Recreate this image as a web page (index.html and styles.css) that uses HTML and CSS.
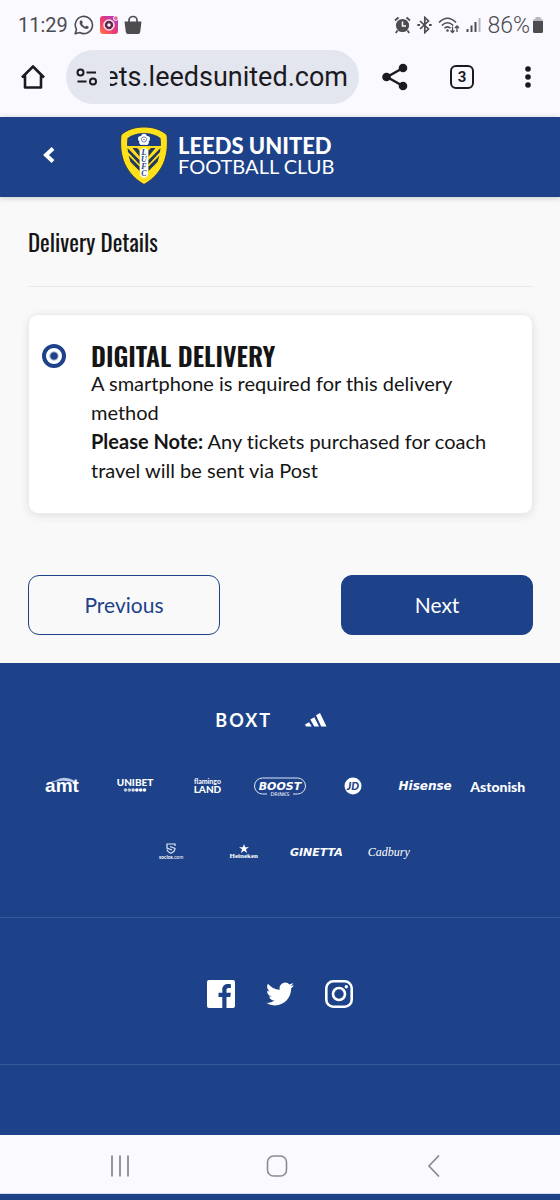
FILE: index.html
```html
<!DOCTYPE html>
<html lang="en">
  <head>
    <meta charset="UTF-8" />
    <meta name="viewport" content="width=device-width, initial-scale=1.0" />
    <title>Delivery Details - Leeds United Football Club</title>
    <link rel="stylesheet" href="styles.css">
  </head>
  <body>
    <div class="status-bar">
      <span class="clock">11:29</span>
      <svg width="20" height="20" viewBox="0 0 20 20">
        <path d="M1.2 18.8l1.3-4.4a8.6 8.6 0 1 1 3.2 3.1z" fill="none" stroke="#4d4d4f" stroke-width="1.6" stroke-linejoin="round" />
        <path d="M6.2 5.8c.7-.9 1.6-.8 1.9 0l.7 1.6c.1.4-.6 1-.8 1.3.8 1.5 1.8 2.4 3.3 3.1.5-.5.9-1.2 1.4-1l1.7.8c.7.5.2 1.500-.5 2-2.2 1.500-7.700-2.100-8.300-5.600-.1-.9.1-1.700.6-2.200z" fill="#4d4d4f" />
      </svg>
      <svg width="18" height="18" viewBox="0 0 18 18">
        <defs>
          <linearGradient id="instaFill" x1="0" y1="1" x2="1" y2="0">
            <stop offset="0" stop-color="#ff7a45" />
            <stop offset="0.45" stop-color="#ee3a72" />
            <stop offset="1" stop-color="#9a3fd0" />
          </linearGradient>
        </defs>
        <rect width="18" height="18" rx="3" fill="url(#instaFill)" />
        <circle cx="9" cy="9" r="5" fill="#5c2a45" stroke="#f9dfe8" stroke-width="1.6" />
        <circle cx="9" cy="9" r="1.7" fill="#fff" />
        <circle cx="15.8" cy="2.2" r="2.3" fill="#e8648c" stroke="#faf9ff" />
      </svg>
      <svg width="18" height="20" viewBox="0 0 18 20">
        <path d="M.5 6.5h17L16.2 17q-.3 2-2 2H3.8q-1.700 0-2-2z" fill="#4d4d4f" />
        <path d="M5 8V5.5a4 4 0 0 1 8 0V8" fill="none" stroke="#4d4d4f" stroke-width="1.7" />
      </svg>
      <div class="status-right">
        <svg width="17" height="18" viewBox="0 0 17 18">
          <circle cx="8.5" cy="9.5" r="6.6" fill="#4d4d4f" />
          <path d="M1 4.5L4.5 1.5M16 4.5L12.5 1.5M3.5 14.5L1.8 17M13.5 14.5l1.7 2.5" stroke="#4d4d4f" stroke-width="1.8" />
          <path d="M8.5 5.5v4.5h3.5" fill="none" stroke="#faf9ff" stroke-width="1.5" />
        </svg>
        <svg width="15" height="18" viewBox="0 0 15 18">
          <path d="M3 5l8.500 8-3.700 3.500V1.500L11.500 5 3 13" fill="none" stroke="#4d4d4f" stroke-width="1.7" />
          <path d="M.3 9h2.700M12 9h2.700" stroke="#4d4d4f" stroke-width="2" />
        </svg>
        <svg width="22" height="18" viewBox="0 0 22 18">
          <path d="M1 6.5q8.500-8.500 17 0M3.8 9.5q5.700-5.500 11.400 0M6.5 12.2q3-2.700 6 0" fill="none" stroke="#4d4d4f" stroke-width="1.6" />
          <circle cx="9.5" cy="14.5" r="1.3" fill="#4d4d4f" />
          <path d="M14.5 10.5v6M12.5 14.5l2 2 2-2M19 16v-6M17 12l2-2 2 2" fill="none" stroke="#4d4d4f" stroke-width="1.3" />
        </svg>
        <svg width="15" height="16" viewBox="0 0 15 16">
          <path d="M1.5 15v-3M5.5 15V8.5M9.5 15V5" stroke="#4d4d4f" stroke-width="2" />
          <path d="M13.5 15V1" stroke="#b5b5ba" stroke-width="2" />
        </svg>
        <span class="battery-level">86%</span>
        <svg width="12" height="16" viewBox="0 0 12 16">
          <path d="M3.5 0h5v2h-5zM1.5 2h9v3h-9z" fill="#b5b5ba" />
          <path d="M1 4h10v10.500q0 1.500-1.500 1.500h-7Q1 16 1 14.500z" fill="#4d4d4f" />
        </svg>
      </div>
    </div>

    <div class="browser-bar">
      <button type="button" class="icon-button" aria-label="Home">
        <svg width="26" height="26" viewBox="0 0 26 26">
          <path d="M2 13.5L13 2.5l11 11M5 11.5V23.5h16V11.5" fill="none" stroke="#1b1b1f" stroke-width="2.6" stroke-linejoin="round" />
        </svg>
      </button>
      <div class="address">
        <svg width="22" height="18" viewBox="0 0 22 18">
          <g fill="none" stroke="#1b1b1f" stroke-width="2">
            <circle cx="4.5" cy="4.5" r="3" />
            <path d="M10.5 4.5H20M1.5 13.5h9" />
            <circle cx="17" cy="13.5" r="3" />
          </g>
        </svg>
        <input type="text" class="url" value="tickets.leedsunited.com" aria-label="Address" />
      </div>
      <div class="browser-actions">
        <button type="button" class="icon-button" aria-label="Share">
          <svg width="26" height="28" viewBox="0 0 26 28">
            <path d="M21 5L5 14l16 9" fill="none" stroke="#1b1b1f" stroke-width="2.5" />
            <g fill="#1b1b1f">
              <circle cx="21" cy="5" r="4.3" />
              <circle cx="4.5" cy="14" r="4.3" />
              <circle cx="21" cy="23" r="4.3" />
            </g>
          </svg>
        </button>
        <button type="button" class="tab-count" aria-label="Open tabs">3</button>
        <button type="button" class="icon-button" aria-label="Menu">
          <svg width="24" height="24" viewBox="0 0 24 24" fill="#1b1b1f">
            <circle cx="12" cy="4" r="2.8" />
            <circle cx="12" cy="12" r="2.8" />
            <circle cx="12" cy="20" r="2.8" />
          </svg>
        </button>
      </div>
    </div>

    <header class="site-header">
      <button type="button" class="icon-button" aria-label="Back">
        <svg width="14" height="18" viewBox="0 0 14 18">
          <path d="M11 1.500L4 8l7 6.500" fill="none" stroke="#fff" stroke-width="4" />
        </svg>
      </button>
      <a href="#" class="brand">
        <svg width="48" height="60" viewBox="0 0 48 60">
          <path d="M24 1C15 1 7 3.500 1 9 -.5 24 1 45 24 58.500 47 45 48.500 24 47 9 41 3.500 33 1 24 1z" fill="#ffe11b" stroke="#29375c" />
          <path d="M24 7c-6 0-12 1.500-16.500 5-.5 3-.5 6-.3 8h33.600c.2-2 .2-5-.3-8C36 8.500 30 7 24 7z" fill="#1d3e80" />
          <path d="M7.500 22l12 12v4.500L8 26zM8.500 29.500l11 11V45L10.500 36zM12.500 22h4.500l2.500 2.500v6zM40.500 22l-12 12v4.500L40 26zM39.500 29.500l-11 11V45l9-9zM35.500 22H31l-2.500 2.500v6z" fill="#22365f" />
          <path d="M20 24q4-4 8 0v25q-4 6-8 0z" fill="#fff" />
          <g fill="#fff">
            <circle cx="24" cy="10.500" r="2.800" />
            <circle cx="20.800" cy="12.800" r="2.800" />
            <circle cx="27.200" cy="12.800" r="2.800" />
            <circle cx="22" cy="16.300" r="2.800" />
            <circle cx="26" cy="16.300" r="2.800" />
          </g>
          <circle cx="24" cy="13.500" r="2.600" fill="none" stroke="#7188b3" />
          <g class="crest-letters">
            <text x="24" y="29">L</text>
            <text x="24" y="36">U</text>
            <text x="24" y="43">F</text>
            <text x="24" y="50">C</text>
          </g>
        </svg>
        <span class="brand-name">
          <strong>LEEDS UNITED</strong>
          <span>FOOTBALL CLUB</span>
        </span>
      </a>
    </header>

    <main>
      <h1>Delivery Details</h1>
      <form>
        <div class="option">
          <input type="radio" id="digital" name="delivery" checked />
          <label for="digital">
            <span class="option-title">DIGITAL DELIVERY</span>
            A smartphone is required for this delivery method<br />
            <b>Please Note:</b> Any tickets purchased for coach travel will be sent via Post
          </label>
        </div>
        <div class="form-actions">
          <button type="button" class="button">Previous</button>
          <button type="submit" class="button button-primary">Next</button>
        </div>
      </form>
    </main>

    <footer>
      <div class="sponsors">
        <div class="sponsor-row">
          <a href="#" class="boxt">BOXT</a>
          <a href="#" aria-label="adidas">
            <svg width="22" height="14" viewBox="0 0 22 14" fill="#fff">
              <path d="M11 2.300L15 0l6.500 13.500h-5.300zM5.300 6.500l4-2.300 4.700 9.300H9.300zM0 11.500l4-2.300 2.800 4.300H1z" />
            </svg>
          </a>
        </div>
        <div class="sponsor-row">
          <a href="#">
            <svg width="36" height="20" viewBox="0 0 36 20">
              <path d="M3 7Q8 5 12 4.500 17 .5 25 2.500q5 1 8 5-11-4-20-2Q8 5.500 3 7z" fill="#b9c8e6" />
              <text x="18" y="16" class="amt">amt</text>
            </svg>
          </a>
          <a href="#">
            <svg width="38" height="24" viewBox="0 0 38 24">
              <text x="19" y="12" class="unibet">UNIBET</text>
              <g fill="#fff">
                <circle cx="9.500" cy="16" r="1.800" opacity="0.7" />
                <circle cx="13.300" cy="16" r="1.800" opacity="0.7" />
                <circle cx="17.100" cy="16" r="1.800" opacity="0.8" />
                <circle cx="20.900" cy="16" r="1.800" />
                <circle cx="24.700" cy="16" r="1.800" />
                <circle cx="28.500" cy="16" r="1.800" />
              </g>
            </svg>
          </a>
          <a href="#" class="flamingo"><span>flamingo</span><strong>LAND</strong></a>
          <a href="#">
            <svg width="54" height="22" viewBox="0 0 54 22">
              <path d="M14 19H9.500A8 8 0 0 1 9.500 3h35a8 8 0 0 1 0 16H40" fill="none" stroke="#dfe7f6" />
              <text x="27" y="15" class="boost">BOOST</text>
              <text x="27" y="21" class="boost-sub">DRINKS</text>
            </svg>
          </a>
          <a href="#">
            <svg width="18" height="18" viewBox="0 0 18 18">
              <circle cx="9" cy="9" r="8.500" fill="#fff" />
              <text x="9" y="13" class="jd">JD</text>
            </svg>
          </a>
          <a href="#" class="hisense">Hisense</a>
          <a href="#" class="astonish">Astonish</a>
        </div>
        <div class="sponsor-row">
          <a href="#" class="socios">
            <svg width="10" height="11" viewBox="0 0 10 11">
              <path d="M9 3V1H1v4l5 2M1 6.500Q1.500 9 5 10.200 9 8.500 9 5.500L4 3.500" fill="none" stroke="#dfe7f6" stroke-width="1.200" />
            </svg>
            <span><b>socios</b>.com</span>
          </a>
          <a href="#" class="heineken">
            <svg width="10" height="9" viewBox="0 0 10 9" fill="#fff">
              <path d="M5 0l1.200 3.200H10L6.900 5.300 8.100 9 5 6.700 1.900 9l1.200-3.700L0 3.200h3.800z" />
            </svg>
            <span>Heineken</span>
          </a>
          <a href="#" class="ginetta">GINETTA</a>
          <a href="#" class="cadbury">Cadbury</a>
        </div>
      </div>
      <div class="social">
        <a href="#" aria-label="Facebook">
          <svg width="28" height="28" viewBox="0 0 28 28">
            <path d="M2 0h24q2 0 2 2v24q0 2-2 2h-6.500V17h3.800l.6-4.200h-4.400v-2.700c0-1.300.5-2 2.100-2h2.300V4.300c-5.500-.8-8.600 1-8.600 5.500v3H11.500V17h3.800v11H2q-2 0-2-2V2q0-2 2-2z" fill="#fff" />
          </svg>
        </a>
        <a href="#" aria-label="Twitter">
          <svg width="28" height="28" viewBox="0 0 24 24">
            <path d="M23.950 4.570a10 10 0 0 1-2.820.77 4.960 4.960 0 0 0 2.160-2.720c-.95.550-2 .96-3.130 1.180a4.920 4.920 0 0 0-8.380 4.480C7.690 8.090 4.070 6.130 1.640 3.160a4.820 4.820 0 0 0-.67 2.480c0 1.710.87 3.210 2.190 4.100a4.900 4.900 0 0 1-2.230-.62v.06a4.920 4.920 0 0 0 3.950 4.830 5 5 0 0 1-2.210.08 4.940 4.940 0 0 0 4.600 3.420A9.870 9.870 0 0 1 0 19.540a14 14 0 0 0 7.550 2.210c9.050 0 14-7.500 14-13.980 0-.21 0-.42-.02-.63a9.940 9.940 0 0 0 2.420-2.570z" fill="#fff" />
          </svg>
        </a>
        <a href="#" aria-label="Instagram">
          <svg width="28" height="28" viewBox="0 0 28 28">
            <rect x="1.300" y="1.300" width="25.400" height="25.400" rx="7" fill="none" stroke="#fff" stroke-width="2.600" />
            <circle cx="14" cy="14" r="6" fill="none" stroke="#fff" stroke-width="2.600" />
            <circle cx="21.300" cy="6.700" r="1.700" fill="#fff" />
          </svg>
        </a>
      </div>
      <div class="footer-end"></div>
    </footer>

    <nav class="system-nav">
      <button type="button" class="icon-button" aria-label="Recent apps">
        <svg width="22" height="22" viewBox="0 0 22 22">
          <path d="M3 .5v21M11 .5v21M19 .5v21" stroke="#8a8a90" stroke-width="1.800" />
        </svg>
      </button>
      <button type="button" class="icon-button" aria-label="Home screen">
        <svg width="22" height="22" viewBox="0 0 22 22">
          <rect x="1.500" y="1" width="19" height="20" rx="6" fill="none" stroke="#8a8a90" stroke-width="1.600" />
        </svg>
      </button>
      <button type="button" class="icon-button" aria-label="Go back">
        <svg width="22" height="22" viewBox="0 0 22 22">
          <path d="M16 .5L6 11l10 10.500" fill="none" stroke="#8a8a90" stroke-width="1.700" />
        </svg>
      </button>
    </nav>
  </body>
</html>
```
FILE: styles.css
```css
* {
  box-sizing: border-box;
}

body {
  margin: 0;
  min-height: 100vh;
  background-color: #1d4289;
  color: #151515;
  font-family: Lato, "Liberation Sans", sans-serif;
  font-size: 20px;
  font-variant-ligatures: none;
  line-height: 29px;
}

button {
  border: none;
  padding: 0;
  background: none;
  font-family: inherit;
  cursor: pointer;
}

a {
  color: #fff;
  text-decoration: none;
}

svg {
  display: block;
  flex: none;
}

/* Phone status bar */
.status-bar {
  display: flex;
  align-items: center;
  gap: 6px;
  height: 50px;
  padding: 0 16px 0 18px;
  background-color: #faf9ff;
  color: #4d4d4f;
  font-family: Roboto, sans-serif;
  font-size: 20px;
}

.status-right {
  display: flex;
  align-items: center;
  gap: 6px;
  margin-left: auto;
}

.battery-level {
  margin-right: -4px;
  font-size: 23px;
  font-weight: 300;
}

/* Browser toolbar */
.browser-bar {
  display: flex;
  align-items: center;
  height: 67px;
  padding: 0 20px 13px;
  background-color: #faf9ff;
}

.icon-button {
  display: flex;
}

.address {
  display: flex;
  flex: 1;
  align-items: center;
  gap: 12px;
  min-width: 0;
  height: 54px;
  margin: 0 23px 0 20px;
  padding: 0 11px 0 10px;
  border-radius: 27px;
  background-color: #e3e5ef;
}

/* rtl keeps the end of a long address in view */
.url {
  flex: 1;
  min-width: 0;
  padding: 0;
  border: none;
  outline: none;
  background: none;
  color: #1b1b1f;
  direction: rtl;
  font-family: Roboto, sans-serif;
  font-size: 27px;
}

.browser-actions {
  display: flex;
  align-items: center;
  gap: 42px;
}

.tab-count {
  width: 24px;
  height: 24px;
  border: 2px solid #1b1b1f;
  border-radius: 6px;
  color: #1b1b1f;
  font-family: Roboto, sans-serif;
  font-size: 15px;
  font-weight: 700;
  line-height: 20px;
}

/* Site header */
.site-header {
  display: flex;
  align-items: center;
  height: 80px;
  padding: 0 42px 2px;
  background-color: #1d4289;
  box-shadow: 0 1px 6px rgba(0, 0, 0, 0.2);
  position: relative;
}

.brand {
  display: flex;
  align-items: center;
  gap: 10px;
  margin-left: 64px;
}

.brand-name {
  display: flex;
  flex-direction: column;
  font-size: 20px;
  line-height: 20px;
}

.brand-name strong {
  font-size: 22px;
  font-weight: 900;
}

.crest-letters {
  fill: #1d3e80;
  font-family: "Liberation Serif", serif;
  font-size: 8px;
  font-style: italic;
  font-weight: 700;
  text-anchor: middle;
}

/* Delivery form */
main {
  padding: 29px 27px 28px 28px;
  background-color: #f9f9f9;
}

h1 {
  margin: 0 0 27px;
  padding-bottom: 28px;
  border-bottom: 1px solid #e9e9e9;
  font-family: Oswald, "Liberation Sans Narrow", sans-serif;
  font-size: 23px;
  font-weight: 400;
  line-height: 32px;
}

.option {
  display: flex;
  align-items: flex-start;
  gap: 25px;
  padding: 28px 13px;
  border: 1px solid #ececec;
  border-radius: 10px;
  background-color: #fff;
  box-shadow: 0 2px 10px rgba(0, 0, 0, 0.1);
}

.option input {
  appearance: none;
  flex: none;
  width: 24px;
  height: 24px;
  margin: 1px 0 0;
  border: 4px solid #1d4289;
  border-radius: 50%;
  background: radial-gradient(circle, #1d4289 3px, #fff 5px) no-repeat;
}

.option-title {
  display: block;
  font-family: Oswald, "Liberation Sans Narrow", sans-serif;
  font-size: 26px;
  font-weight: 600;
  line-height: 26px;
}

.form-actions {
  display: flex;
  justify-content: space-between;
  margin-top: 61px;
}

.button {
  width: 38%;
  height: 60px;
  padding-bottom: 2px;
  border: 1px solid #1d4289;
  border-radius: 11px;
  color: #1d4289;
  font-size: 21px;
}

.button-primary {
  background-color: #1d4289;
  color: #fff;
}

/* Footer */
footer {
  color: #fff;
}

.sponsors {
  padding: 24px 26px 32px;
  border-bottom: 1px solid #375999;
}

.sponsor-row {
  display: flex;
  justify-content: center;
}

.sponsor-row a {
  display: flex;
  flex-direction: column;
  align-items: center;
  justify-content: center;
  width: calc(100% / 7);
  height: 66px;
  white-space: nowrap;
}

.sponsor-row text {
  fill: #fff;
  text-anchor: middle;
}

.boxt {
  font-size: 18px;
  font-weight: 700;
  letter-spacing: 2px;
}

.amt {
  font-family: "Liberation Sans", sans-serif;
  font-size: 19px;
  font-weight: 700;
}

.unibet {
  font-size: 10px;
  font-weight: 900;
}

.flamingo {
  font-size: 7px;
  font-weight: 700;
  line-height: 7px;
}

.flamingo strong {
  font-size: 10px;
  font-weight: 900;
  line-height: 9px;
}

.boost {
  font-family: "DejaVu Sans", sans-serif;
  font-size: 11px;
  font-style: italic;
  font-weight: 700;
}

.boost-sub {
  font-family: "DejaVu Sans", sans-serif;
  font-size: 5px;
}

.sponsor-row .jd {
  fill: #1d4289;
  font-size: 11px;
  font-style: italic;
  font-weight: 900;
}

.hisense {
  font-family: "DejaVu Sans", sans-serif;
  font-size: 12px;
  font-style: italic;
  font-weight: 700;
}

.astonish {
  font-size: 14px;
  font-weight: 900;
}

.socios {
  font-size: 5px;
  line-height: 7px;
}

.heineken {
  font-family: "Liberation Serif", serif;
  font-size: 7px;
  font-weight: 700;
  line-height: 7px;
}

.ginetta {
  font-family: "DejaVu Sans", sans-serif;
  font-size: 11px;
  font-style: italic;
  font-weight: 700;
}

.cadbury {
  font-family: "Liberation Serif", serif;
  font-size: 12px;
  font-style: italic;
}

.social {
  display: flex;
  justify-content: center;
  gap: 31px;
  padding: 62px 0 56px;
  border-bottom: 1px solid #375999;
}

.footer-end {
  height: 70px;
}

/* Phone navigation bar */
.system-nav {
  display: flex;
  align-items: center;
  justify-content: space-between;
  height: 59px;
  padding: 4px 115px 0 109px;
  border-bottom: 1px solid #d9dcec;
  background-color: #faf9ff;
}
```
